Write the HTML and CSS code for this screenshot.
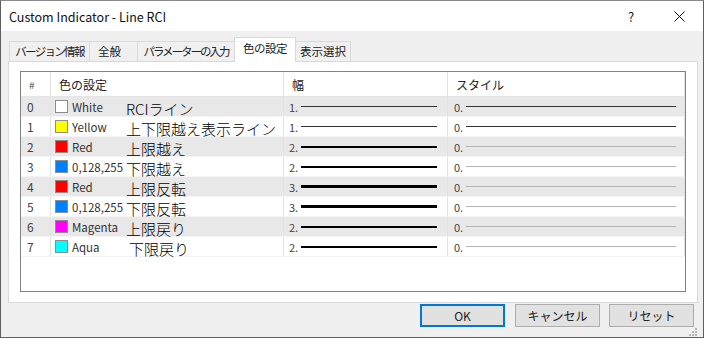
FILE: index.html
```html
<!DOCTYPE html>
<html lang="ja">
<head>
    <meta charset="UTF-8">
    <title>Custom Indicator - Line RCI</title>
    <link rel="stylesheet" href="styles.css">
</head>
<body>

<div class="window">
    <div class="titlebar">
        <span class="title">Custom Indicator - Line RCI</span>
        <span class="help">?</span>
        <span class="close">
            <svg width="11" height="11" viewBox="0 0 11 11"><path d="M0.5 0.5 L10.5 10.5 M10.5 0.5 L0.5 10.5" stroke="#111" stroke-width="1" fill="none"/></svg>
        </span>
    </div>

    <div class="client">
        <div class="tabs">
            <div class="tab t1">バージョン情報</div>
            <div class="tab t2">全般</div>
            <div class="tab t3">パラメーターの入力</div>
            <div class="tab t4 active">色の設定</div>
            <div class="tab t5">表示選択</div>
        </div>

        <div class="panel">
            <div class="listview">
                <div class="row head">
                    <div class="cell c-num">#</div>
                    <div class="cell">色の設定</div>
                    <div class="cell">幅</div>
                    <div class="cell">スタイル</div>
                </div>

                <div class="row alt">
                    <div class="cell c-num">0</div>
                    <div class="cell c-color"><span class="swatch" style="background:#ffffff"></span><span class="cname">White</span><span class="note">RCIライン</span></div>
                    <div class="cell c-line"><span class="lnum">1.</span><span class="line w1"></span></div>
                    <div class="cell c-line style"><span class="lnum">0.</span><span class="line w1"></span></div>
                </div>
                <div class="row">
                    <div class="cell c-num">1</div>
                    <div class="cell c-color"><span class="swatch" style="background:#ffff00"></span><span class="cname">Yellow</span><span class="note">上下限越え表示ライン</span></div>
                    <div class="cell c-line"><span class="lnum">1.</span><span class="line w1"></span></div>
                    <div class="cell c-line style"><span class="lnum">0.</span><span class="line w1"></span></div>
                </div>
                <div class="row alt">
                    <div class="cell c-num">2</div>
                    <div class="cell c-color"><span class="swatch" style="background:#ff0000"></span><span class="cname">Red</span><span class="note">上限越え</span></div>
                    <div class="cell c-line"><span class="lnum">2.</span><span class="line w2"></span></div>
                    <div class="cell c-line style"><span class="lnum">0.</span><span class="line faint"></span></div>
                </div>
                <div class="row">
                    <div class="cell c-num">3</div>
                    <div class="cell c-color"><span class="swatch" style="background:#0080ff"></span><span class="cname">0,128,255</span><span class="note">下限越え</span></div>
                    <div class="cell c-line"><span class="lnum">2.</span><span class="line w2"></span></div>
                    <div class="cell c-line style"><span class="lnum">0.</span><span class="line faint"></span></div>
                </div>
                <div class="row alt">
                    <div class="cell c-num">4</div>
                    <div class="cell c-color"><span class="swatch" style="background:#ff0000"></span><span class="cname">Red</span><span class="note">上限反転</span></div>
                    <div class="cell c-line"><span class="lnum">3.</span><span class="line w3"></span></div>
                    <div class="cell c-line style"><span class="lnum">0.</span><span class="line faint"></span></div>
                </div>
                <div class="row">
                    <div class="cell c-num">5</div>
                    <div class="cell c-color"><span class="swatch" style="background:#0080ff"></span><span class="cname">0,128,255</span><span class="note">下限反転</span></div>
                    <div class="cell c-line"><span class="lnum">3.</span><span class="line w3"></span></div>
                    <div class="cell c-line style"><span class="lnum">0.</span><span class="line faint"></span></div>
                </div>
                <div class="row alt">
                    <div class="cell c-num">6</div>
                    <div class="cell c-color"><span class="swatch" style="background:#ff00ff"></span><span class="cname">Magenta</span><span class="note">上限戻り</span></div>
                    <div class="cell c-line"><span class="lnum">2.</span><span class="line w2"></span></div>
                    <div class="cell c-line style"><span class="lnum">0.</span><span class="line faint"></span></div>
                </div>
                <div class="row">
                    <div class="cell c-num">7</div>
                    <div class="cell c-color"><span class="swatch" style="background:#00ffff"></span><span class="cname">Aqua</span><span class="note n7">下限戻り</span></div>
                    <div class="cell c-line"><span class="lnum">2.</span><span class="line w2"></span></div>
                    <div class="cell c-line style"><span class="lnum">0.</span><span class="line faint"></span></div>
                </div>
            </div>
        </div>

        <div class="buttons">
            <button class="btn default">OK</button>
            <button class="btn">キャンセル</button>
            <button class="btn last">リセット</button>
            <svg class="grip" width="10" height="10" viewBox="0 0 10 10" fill="#b8b8b8">
                <rect x="7" y="1" width="2" height="2"/>
                <rect x="4" y="4" width="2" height="2"/><rect x="7" y="4" width="2" height="2"/>
                <rect x="1" y="7" width="2" height="2"/><rect x="4" y="7" width="2" height="2"/><rect x="7" y="7" width="2" height="2"/>
            </svg>
        </div>
    </div>
</div>

</body>
</html>
```

FILE: styles.css
```css
body {
    margin: 0;
    font-family: "Noto Sans CJK JP", "Noto Sans", sans-serif;
    font-size: 12px;
    color: #000;
    background: #fff;
}

.window {
    width: 704px;
    height: 338px;
    box-sizing: border-box;
    border: 1px solid #5f5f5f;
    border-top-color: #8a8a8a;
    display: flex;
    flex-direction: column;
}

/* barre de titre */
.titlebar {
    height: 30px;
    background: #fff;
    display: flex;
    align-items: center;
    padding-left: 8px;
    flex-shrink: 0;
}

.title {
    flex: 1;
    font-size: 12.5px;
    color: #111;
}

.help {
    width: 46px;
    font-size: 13px;
    color: #222;
    text-align: center;
    margin-right: 2px;
}

.close {
    width: 46px;
    display: flex;
    justify-content: center;
    align-items: center;
    margin-right: 1px;
}

.client {
    flex: 1;
    background: #f0f0f0;
    padding: 9px 5px 0 7px;
    display: flex;
    flex-direction: column;
}

/* onglets */
.tabs {
    display: flex;
    align-items: flex-end;
    height: 21px;
    padding-left: 1px;
}

.tab {
    height: 20px;
    box-sizing: border-box;
    border: 1px solid #d9d9d9;
    border-bottom: none;
    border-right: none;
    background: #f0f0f0;
    color: #222;
    font-size: 11.5px;
    display: flex;
    align-items: center;
    justify-content: center;
    line-height: 1;
    white-space: nowrap;
}

.t1 { width: 80px; letter-spacing: -1.7px; }
.t2 { width: 48px; justify-content: flex-start; padding-left: 8px; }
.t3 { width: 97px; letter-spacing: -2px; }
.t5 { width: 55px; border-right: 1px solid #d9d9d9; letter-spacing: 0; }

.tab.active {
    width: 62px;
    height: 25px;
    margin-bottom: -1px;
    background: #fff;
    border-right: 1px solid #d9d9d9;
    position: relative;
    z-index: 1;
    padding-bottom: 3px;
    letter-spacing: -0.5px;
}

.tab.active + .tab { border-left: none; }

.panel {
    height: 242px;
    box-sizing: border-box;
    background: #fff;
    border: 1px solid #d9d9d9;
    padding: 9px 0 0 11px;
}

/* liste */
.listview {
    width: 666px;
    height: 221px;
    box-sizing: border-box;
    border: 1px solid #828282;
    background: #fff;
    overflow: hidden;
}

.row {
    display: grid;
    grid-template-columns: 30px 233px 164px 237px;
    height: 20px;
    box-sizing: border-box;
    border-bottom: 1px solid #f4f4f4;
}

.row.alt { background: #e8e8e8; }

.row.head {
    height: 25px;
    background: #fff;
    border-bottom: 1px solid #e5e5e5;
}

.cell {
    border-right: 1px solid #e2e2e2;
    display: flex;
    align-items: center;
    padding-left: 7px;
    overflow: visible;
    white-space: nowrap;
    color: #222;
}

.row.head .cell {
    padding-left: 8px;
    color: #222;
}

.row.head .c-num {
    font-size: 10px;
    color: #666;
}

.c-num {
    padding-left: 6px;
    color: #444;
    font-size: 12px;
}

.c-color { padding-left: 4px; }

.swatch {
    width: 11px;
    height: 11px;
    border: 1px solid #8c8c8c;
    margin-right: 4px;
    flex-shrink: 0;
}

.cname {
    width: 54px;
    color: #333;
    font-size: 11.5px;
}

.note {
    font-size: 15px;
    font-weight: 300;
    line-height: 1;
    color: #000;
    margin-top: 3px;
}

.n7 { margin-left: 3px; }

.c-line {
    padding-left: 5px;
    padding-right: 10px;
}

.c-line.style { padding-left: 6px; padding-right: 8px; }

.lnum {
    width: 12px;
    color: #444;
    font-size: 11px;
}

.line {
    flex: 1;
    background: #333;
}

.line.w1 { height: 1px; }
.line.w2 { height: 2px; background: #000; }
.line.w3 { height: 3px; background: #000; }
.line.faint { height: 1px; background: #b4b4b4; }

/* boutons */
.buttons {
    display: flex;
    justify-content: flex-end;
    align-items: flex-start;
    padding-top: 1px;
    padding-right: 4px;
    position: relative;
    flex: 1;
}

.btn {
    width: 85px;
    height: 23px;
    margin-left: 10px;
    background: #e1e1e1;
    border: 1px solid #adadad;
    font-family: "Noto Sans CJK JP", "Noto Sans", sans-serif;
    font-size: 12px;
    color: #222;
    padding: 0;
}

.btn.default {
    border: 2px solid #0078d7;
}

.btn.last { margin-left: 9px; }

.grip {
    position: absolute;
    right: 0;
    bottom: 0;
}
```
